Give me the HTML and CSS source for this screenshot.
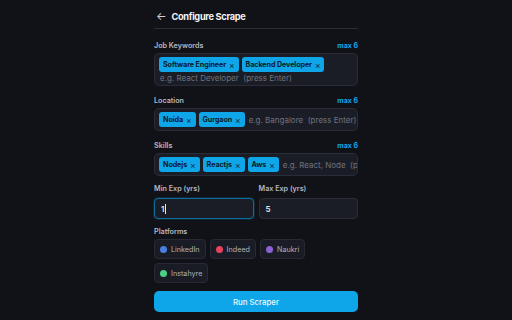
FILE: index.html
```html
<!DOCTYPE html>
<html lang="en">
<head>
    <meta charset="UTF-8">
    <link rel="stylesheet" href="styles.css">
</head>
<body>
    <div class="panel">
        <div class="header">
            <span class="back">&larr;</span>
            <h1 class="title">Configure Scrape</h1>
        </div>

        <div class="field">
            <div class="label-row">
                <span class="label">Job Keywords</span>
                <span class="max">max 6</span>
            </div>
            <div class="tag-box wrap">
                <span class="tag">Software Engineer <span class="x">&times;</span></span>
                <span class="tag">Backend Developer <span class="x">&times;</span></span>
                <span class="placeholder">e.g. React Developer&nbsp; (press Enter)</span>
            </div>
        </div>

        <div class="field">
            <div class="label-row">
                <span class="label">Location</span>
                <span class="max">max 6</span>
            </div>
            <div class="tag-box">
                <span class="tag">Noida <span class="x">&times;</span></span>
                <span class="tag">Gurgaon <span class="x">&times;</span></span>
                <span class="placeholder">e.g. Bangalore&nbsp; (press Enter)</span>
            </div>
        </div>

        <div class="field">
            <div class="label-row">
                <span class="label">Skills</span>
                <span class="max">max 6</span>
            </div>
            <div class="tag-box">
                <span class="tag">Nodejs <span class="x">&times;</span></span>
                <span class="tag">Reactjs <span class="x">&times;</span></span>
                <span class="tag">Aws <span class="x">&times;</span></span>
                <span class="placeholder">e.g. React, Node&nbsp; (press Enter)</span>
            </div>
        </div>

        <div class="exp-row">
            <div class="exp">
                <span class="label">Min Exp (yrs)</span>
                <div class="input focused">1<span class="caret"></span></div>
            </div>
            <div class="exp">
                <span class="label">Max Exp (yrs)</span>
                <div class="input">5</div>
            </div>
        </div>

        <div class="platform-field">
            <div class="label-row">
                <span class="label">Platforms</span>
            </div>
            <div class="platforms">
                <span class="platform"><span class="dot linkedin"></span>LinkedIn</span>
                <span class="platform"><span class="dot indeed"></span>Indeed</span>
                <span class="platform"><span class="dot naukri"></span>Naukri</span>
                <span class="platform"><span class="dot instahyre"></span>Instahyre</span>
            </div>
        </div>

        <button class="run-button">Run Scraper</button>
    </div>
</body>
</html>
```

FILE: styles.css
```css
body {
    font-family: 'Inter', 'Noto Sans', sans-serif;
    margin: 0;
    background-color: #111217;
    color: #e5e7eb;
}

.panel {
    width: 204px;
    margin: 0 auto;
    padding-top: 6px;
}

.header {
    display: flex;
    align-items: center;
    gap: 5px;
    height: 22px;
    border-bottom: 1px solid #2a2d38;
}

.back {
    color: #d1d5db;
    font-size: 11px;
    line-height: 11px;
    margin-left: 2px;
    margin-top: -2px;
}

.title {
    margin: 0;
    font-size: 9.2px;
    font-weight: 700;
    letter-spacing: -0.3px;
    color: #f3f4f6;
    margin-top: -2px;
}

.field {
    margin-top: 9px;
}

.header + .field {
    margin-top: 11px;
}

.label-row {
    display: flex;
    justify-content: space-between;
    align-items: center;
    height: 10px;
    margin-bottom: 3px;
}

.label {
    font-size: 7.2px;
    font-weight: 600;
    color: #b4b8c2;
}

.max {
    font-size: 7px;
    font-weight: 700;
    color: #0ea5e9;
}

.tag-box {
    display: flex;
    align-items: center;
    gap: 3px;
    padding: 3px 4px;
    background-color: #1b1d26;
    border: 1px solid #2a2d38;
    border-radius: 5px;
    overflow: hidden;
    white-space: nowrap;
}

.tag-box.wrap {
    flex-wrap: wrap;
    row-gap: 1px;
    padding-bottom: 2px;
}

.tag {
    display: inline-flex;
    align-items: center;
    gap: 3px;
    height: 15px;
    padding: 0 4px;
    background-color: #0ea5e9;
    color: #0b1a2b;
    font-size: 7.2px;
    font-weight: 700;
    letter-spacing: -0.1px;
    border-radius: 3px;
    flex-shrink: 0;
}

.x {
    font-weight: 400;
    font-size: 8.5px;
    color: #0c2c45;
}

.placeholder {
    font-size: 8px;
    color: #6e7381;
    padding-left: 1px;
    line-height: 10px;
}

.exp-row {
    display: grid;
    grid-template-columns: 1fr 1fr;
    gap: 5px;
    margin-top: 8px;
}

.exp {
    display: flex;
    flex-direction: column;
    gap: 4px;
}

.exp .label {
    line-height: 10px;
}

.input {
    height: 19px;
    display: flex;
    align-items: center;
    padding: 0 6px;
    background-color: #1b1d26;
    border: 1px solid #2a2d38;
    border-radius: 4px;
    font-size: 8px;
    font-weight: 600;
    color: #e5e7eb;
}

.input.focused {
    border-color: #0b6f9c;
    box-shadow: 0 0 0 1px rgba(14, 165, 233, 0.15);
}

.caret {
    width: 1px;
    height: 10px;
    background-color: #e5e7eb;
    margin-left: 1px;
}

.platform-field {
    margin-top: 7px;
}

.platforms {
    display: flex;
    flex-wrap: wrap;
    gap: 4px;
}

.platform {
    display: inline-flex;
    align-items: center;
    gap: 4px;
    height: 18px;
    padding: 0 5px;
    background-color: #1a1c25;
    border: 1px solid #272a35;
    border-radius: 4px;
    font-size: 7.2px;
    color: #aeb3bd;
}

.dot {
    width: 7px;
    height: 7px;
    border-radius: 50%;
}

.linkedin { background-color: #4a7fe0; }
.indeed { background-color: #e8435a; }
.naukri { background-color: #8a63d2; }
.instahyre { background-color: #4ad086; }

.run-button {
    display: block;
    width: 100%;
    height: 21px;
    margin-top: 8px;
    background-color: #0ea5e9;
    color: #f0f9ff;
    border: none;
    border-radius: 5px;
    font-family: 'Inter', 'Noto Sans', sans-serif;
    font-size: 7.8px;
    font-weight: 500;
}
```
